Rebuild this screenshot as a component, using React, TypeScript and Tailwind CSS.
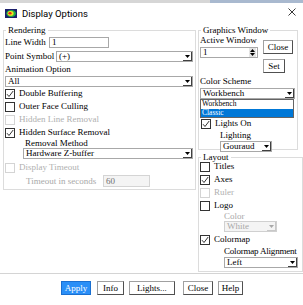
import React from "react";

function Arrow({ disabled = false, up = false }: { disabled?: boolean; up?: boolean }) {
  return (
    <svg width="5" height="3" viewBox="0 0 5 3">
      <path d={up ? "M0 3h5L2.5 0z" : "M0 0h5L2.5 3z"} fill={disabled ? "#a8a8a8" : "#000"} />
    </svg>
  );
}

function Select({ value, className = "", disabled = false }: { value: string; className?: string; disabled?: boolean }) {
  return (
    <div
      className={`flex h-[11px] shrink-0 border ${
        disabled ? "border-[#d0d0d0] bg-[#f4f4f4] text-[#a8a8a8]" : "border-[#a8a8a8] bg-white text-black"
      } ${className}`}
    >
      <span className="flex-1 overflow-hidden whitespace-nowrap pl-[2px] leading-[9px]">{value}</span>
      <span
        className={`flex w-[9px] items-center justify-center border-r border-b ${
          disabled ? "border-[#c8c8c8]" : "border-[#404040]"
        }`}
      >
        <Arrow disabled={disabled} />
      </span>
    </div>
  );
}

function Input({ value, className = "", disabled = false }: { value: string; className?: string; disabled?: boolean }) {
  return (
    <div
      className={`shrink-0 border pl-[2px] leading-[9px] ${
        disabled ? "border-[#d4d4d4] bg-[#f4f4f4] text-[#707070]" : "border-[#a8a8a8] bg-white text-black"
      } ${className}`}
    >
      {value}
    </div>
  );
}

function Check({
  label,
  checked = false,
  disabled = false,
  className = "",
}: {
  label: string;
  checked?: boolean;
  disabled?: boolean;
  className?: string;
}) {
  return (
    <div className={`flex h-[13px] shrink-0 items-center ${className}`}>
      <span
        className={`flex h-[10px] w-[10px] items-center justify-center border bg-white ${
          disabled ? "border-[#d4d4d4]" : "border-[#333333]"
        }`}
      >
        {checked && (
          <svg width="8" height="8" viewBox="0 0 8 8">
            <path d="M1 4.2l2 2.3L7.2 1" fill="none" stroke="#333" strokeWidth="1" />
          </svg>
        )}
      </span>
      <span className={`ml-[4px] whitespace-nowrap leading-[11px] ${disabled ? "text-[#b0b0b0]" : ""}`}>{label}</span>
    </div>
  );
}

function Btn({ children, className = "", primary = false }: { children: React.ReactNode; className?: string; primary?: boolean }) {
  return (
    <div
      className={`flex h-[14px] shrink-0 items-center justify-center border leading-[10px] ${
        primary
          ? "border-[#1a6fd0] bg-[#2a8ff7] text-white"
          : "border-[#a0a0a0] border-r-[#505050] border-b-[#505050] bg-white text-black"
      } ${className}`}
    >
      {children}
    </div>
  );
}

function Group({ title, className = "", children }: { title: string; className?: string; children: React.ReactNode }) {
  return (
    <div className={`relative shrink-0 border border-[#dcdcdc] ${className}`}>
      <span className="absolute left-[2px] top-[-5px] bg-white px-[2px] leading-[9px]">{title}</span>
      {children}
    </div>
  );
}

export default function App() {
  return (
    <div className="flex h-[305px] w-[303px] flex-col overflow-hidden bg-white font-['Liberation_Serif',serif] text-[9px] text-black">
      {/* top strip from window behind */}
      <div className="flex h-[3px] shrink-0">
        <div className="w-[210px] bg-[#d6d6d6]" />
        <div className="flex-1 bg-[#a9b9cf]" />
      </div>

      {/* title bar */}
      <div className="flex h-[25px] shrink-0 items-start">
        <svg className="ml-[5px] mt-[6px]" width="12" height="9" viewBox="0 0 12 9">
          <rect width="12" height="9" fill="#1b1f6b" />
          <ellipse cx="6.2" cy="4.5" rx="4.8" ry="3.4" fill="#1fae4a" />
          <ellipse cx="5.6" cy="4.4" rx="3" ry="2.3" fill="#f2e51a" />
          <ellipse cx="5" cy="4.3" rx="1.6" ry="1.3" fill="#e32222" />
        </svg>
        <span className="ml-[5px] mt-[5px] font-['Roboto',sans-serif] text-[9.5px] leading-[12px] text-black">
          Display Options
        </span>
        <svg className="ml-auto mr-[7px] mt-[5px]" width="8" height="8" viewBox="0 0 8 8">
          <path d="M0.5 0.5l7 7M7.5 0.5l-7 7" stroke="#222" strokeWidth="0.9" />
        </svg>
      </div>

      {/* body */}
      <div className="flex h-[245px] shrink-0">
        {/* left column */}
        <div className="ml-[3px] mt-[2px] w-[193px] shrink-0">
          <Group title="Rendering" className="flex h-[160px] w-[193px] flex-col">
            <div className="mt-[6px] flex h-[11px] items-center pl-[1px]">
              <span className="w-[44px] leading-[11px]">Line Width</span>
              <Input className="h-[11px] w-[60px]" value="1" />
            </div>
            <div className="mt-[3px] flex h-[11px] items-center pl-[1px]">
              <span className="w-[51px] leading-[11px]">Point Symbol</span>
              <Select className="w-[137px]" value="(+)" />
            </div>
            <div className="mt-[2px] h-[11px] pl-[1px] leading-[11px]">Animation Option</div>
            <Select className="ml-[1px] mt-[1px] w-[188px]" value="All" />
            <Check className="pl-[1px]" label="Double Buffering" checked />
            <Check className="pl-[1px]" label="Outer Face Culling" />
            <Check className="pl-[1px]" label="Hidden Line Removal" disabled />
            <Check className="pl-[1px]" label="Hidden Surface Removal" checked />
            <div className="h-[9px] pl-[21px] leading-[9px]">Removal Method</div>
            <Select className="ml-[19px] w-[170px]" value="Hardware Z-buffer" />
            <Check className="mt-[2px] pl-[1px]" label="Display Timeout" disabled />
            <div className="mt-[1px] flex h-[12px] items-center pl-[22px]">
              <span className="w-[77px] whitespace-nowrap leading-[11px] text-[#a8a8a8]">Timeout in seconds</span>
              <Input className="h-[12px] w-[47px] leading-[10px]" value="60" disabled />
            </div>
          </Group>
        </div>

        {/* right column */}
        <div className="ml-[2px] mt-[2px] flex w-[105px] shrink-0 flex-col">
          <Group title="Graphics Window" className="flex h-[120px] w-[100px] flex-col">
            <div className="flex">
              <div className="ml-[1px] flex w-[58px] flex-col">
                <div className="mt-[4px] h-[11px] whitespace-nowrap leading-[11px]">Active Window</div>
                <div className="mt-[1px] flex h-[11px] w-[58px] border border-[#a8a8a8] bg-white">
                  <span className="flex-1 pl-[2px] leading-[9px]">1</span>
                  <span className="mr-[1px] flex w-[7px] flex-col items-center justify-center gap-[1px] bg-[#e4e4e4]">
                    <Arrow up />
                    <Arrow />
                  </span>
                </div>
              </div>
              <div className="ml-[5px] flex flex-col">
                <Btn className="mt-[9px] h-[12px] w-[30px]">Close</Btn>
                <Btn className="mt-[5px] h-[12px] w-[22px]">Set</Btn>
              </div>
            </div>
            <div className="ml-[1px] mt-[3px] h-[11px] leading-[11px]">Color Scheme</div>
            <div className="relative ml-[1px] mt-[1px]">
              <Select className="w-[95px]" value="Workbench" />
              <div className="absolute left-0 top-[11px] z-10 w-[94px] border border-[#646464] bg-white text-[7.5px]">
                <div className="h-[8.5px] pl-[1px] leading-[8.5px]">Workbench</div>
                <div className="h-[8.5px] bg-[#0078d7] pl-[1px] leading-[8.5px] text-white">Classic</div>
              </div>
            </div>
            <Check className="ml-[2px] mt-[18px]" label="Lights On" checked />
            <div className="h-[11px] pl-[21px] leading-[11px]">Lighting</div>
            <Select className="ml-[21px] w-[52px]" value="Gouraud" />
          </Group>

          <Group title="Layout" className="mt-[7px] flex h-[115px] w-[105px] flex-col">
            <Check className="ml-[1px] mt-[2px]" label="Titles" />
            <Check className="ml-[1px]" label="Axes" checked />
            <Check className="ml-[1px]" label="Ruler" disabled />
            <Check className="ml-[1px]" label="Logo" />
            <div className="h-[9px] pl-[25px] leading-[9px] text-[#a8a8a8]">Color</div>
            <Select className="ml-[25px] w-[53px]" value="White" disabled />
            <Check className="ml-[1px] mt-[1px]" label="Colormap" checked />
            <div className="h-[11px] whitespace-nowrap pl-[25px] leading-[11px] tracking-[-0.2px]">Colormap Alignment</div>
            <Select className="ml-[25px] w-[74px]" value="Left" />
          </Group>
        </div>
      </div>

      {/* separator */}
      <div className="h-[1px] shrink-0 bg-[#d4d4d4]" />

      {/* buttons */}
      <div className="mt-[7px] flex shrink-0">
        <Btn primary className="ml-[61px] w-[30px]">Apply</Btn>
        <Btn className="ml-[6px] w-[27px]">Info</Btn>
        <Btn className="ml-[5px] w-[46px]">Lights...</Btn>
        <Btn className="ml-[8px] w-[30px]">Close</Btn>
        <Btn className="ml-[5px] w-[25px]">Help</Btn>
      </div>
    </div>
  );
}
